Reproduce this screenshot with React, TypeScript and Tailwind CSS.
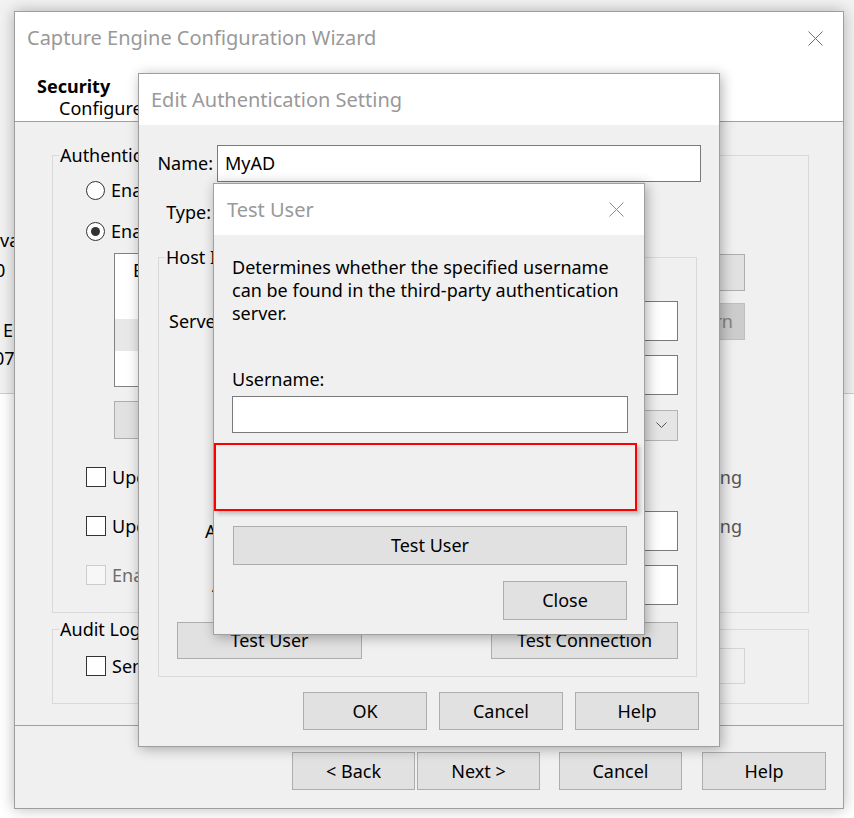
import React from "react";

function CloseX({ color = "#777" }: { color?: string }) {
  return (
    <svg width="15" height="15" viewBox="0 0 15 15">
      <path d="M0.5 0.5 L14.5 14.5 M14.5 0.5 L0.5 14.5" stroke={color} strokeWidth="1" fill="none" />
    </svg>
  );
}

function Btn({
  className = "",
  children,
  disabled = false,
}: {
  className?: string;
  children?: React.ReactNode;
  disabled?: boolean;
}) {
  return (
    <div
      className={
        (disabled
          ? "border-[#bfbfbf] bg-[#cccccc] text-[#838383] "
          : "border-[#adadad] bg-[#e1e1e1] text-black ") +
        "flex shrink-0 items-center justify-center border " +
        className
      }
    >
      {children}
    </div>
  );
}

function Radio({ checked = false }: { checked?: boolean }) {
  return (
    <span className="flex h-[19px] w-[19px] shrink-0 items-center justify-center rounded-full border border-[#333333] bg-white">
      {checked && <span className="h-[9px] w-[9px] rounded-full bg-[#333333]" />}
    </span>
  );
}

function Check({ disabled = false }: { disabled?: boolean }) {
  return (
    <span
      className={
        (disabled ? "border-[#cccccc] bg-[#f7f7f7] " : "border-[#333333] bg-white ") +
        "block h-[20px] w-[20px] shrink-0 border"
      }
    />
  );
}

function Input({ className = "", children }: { className?: string; children?: React.ReactNode }) {
  return (
    <div className={"flex shrink-0 items-center border border-[#7a7a7a] bg-white " + className}>{children}</div>
  );
}

export default function App() {
  return (
    <div className="relative h-[818px] w-[854px] overflow-hidden bg-white font-['Segoe_UI','Noto_Sans',sans-serif] text-[18px] text-black">
      {/* background application window */}
      <div className="absolute inset-0 flex flex-col">
        <div className="h-[394px] border-b border-[#cfcfcf] bg-[#f2f2f2] pt-[228px] leading-[24px]">
          <div className="-ml-[15px]">Java</div>
          <div className="-ml-[5px] mt-[6px]">0</div>
          <div className="ml-[3px] mt-[36px]">E</div>
          <div className="-ml-[6px] mt-[4px]">07</div>
        </div>
        <div className="flex-1 bg-white" />
      </div>

      {/* Wizard window */}
      <div className="absolute left-[14px] top-[11px] flex h-[798px] w-[830px] flex-col border border-[#9e9e9e] bg-[#f0f0f0] shadow-[0_0_14px_rgba(0,0,0,0.28)]">
        <div className="h-[110px] shrink-0 border-b border-[#a0a0a0] bg-white">
          <div className="flex h-[52px] items-center justify-between pl-[12px] pr-[20px]">
            <span className="text-[20px] text-[#999999]">Capture Engine Configuration Wizard</span>
            <CloseX color="#6f6f6f" />
          </div>
          <div className="mt-[11px] pl-[22px] font-bold leading-[22px]">Security</div>
          <div className="pl-[44px] leading-[22px]">Configure authentication settings for the capture engine.</div>
        </div>

        <div className="flex-1 pl-[37px] pt-[22px]">
          <fieldset className="h-[469px] w-[757px] min-w-0 border border-[#d9d9d9]">
            <legend className="ml-[6px] px-[1px] leading-[22px]">Authentication</legend>
            <div className="mt-[14px] flex h-[20px] items-center pl-[33px]">
              <Radio />
              <span className="ml-[6px]">Enable built-in authentication only</span>
            </div>
            <div className="mt-[21px] flex h-[20px] items-center pl-[33px]">
              <Radio checked />
              <span className="ml-[6px]">Enable third-party authentication</span>
            </div>
            <div className="mt-[12px] flex pl-[61px]">
              <div className="flex h-[134px] w-[490px] flex-col border border-[#828282] bg-white">
                <div className="flex h-[32px] items-center pl-[18px]">Enterprise Directory</div>
                <div className="h-[33px]" />
                <div className="h-[32px] bg-[#e8e8e8]" />
              </div>
              <div className="ml-auto mr-[63px] flex flex-col gap-[12px] pt-[1px]">
                <Btn className="h-[37px] w-[123px]">Add</Btn>
                <Btn disabled className="h-[37px] w-[123px] !justify-end pr-[11px]">Learn</Btn>
              </div>
            </div>
            <div className="mt-[14px] pl-[61px]">
              <Btn className="h-[38px] w-[150px]">Edit</Btn>
            </div>
            <div className="mt-[28px] flex h-[20px] items-center pl-[33px]">
              <Check />
              <span className="ml-[6px]">Update user settings</span>
              <span className="ml-auto mr-[66px] text-[#555555]">Logging</span>
            </div>
            <div className="mt-[29px] flex h-[20px] items-center pl-[33px]">
              <Check />
              <span className="ml-[6px]">Update group settings</span>
              <span className="ml-auto mr-[66px] text-[#555555]">Logging</span>
            </div>
            <div className="mt-[29px] flex h-[20px] items-center pl-[33px]">
              <Check disabled />
              <span className="ml-[6px] text-[#6d6d6d]">Enable single sign-on</span>
            </div>
          </fieldset>

          <fieldset className="mt-[5px] h-[86px] w-[757px] min-w-0 border border-[#d9d9d9]">
            <legend className="ml-[6px] px-[1px] leading-[22px]">Audit Log</legend>
            <div className="mt-[8px] flex items-center pl-[33px]">
              <Check />
              <span className="ml-[6px]">Send audit log</span>
              <div className="ml-auto mr-[63px] h-[36px] w-[123px] border border-[#d4d4d4] bg-[#f0f0f0]" />
            </div>
          </fieldset>
        </div>

        <div className="flex h-[83px] shrink-0 items-start justify-end border-t border-[#a0a0a0] pr-[17px] pt-[26px]">
          <Btn className="h-[38px] w-[123px]">&lt; Back</Btn>
          <Btn className="ml-[2px] h-[38px] w-[123px]">Next &gt;</Btn>
          <Btn className="ml-[19px] h-[38px] w-[123px]">Cancel</Btn>
          <Btn className="ml-[20px] h-[38px] w-[124px]">Help</Btn>
        </div>
      </div>

      {/* Edit Authentication Setting dialog */}
      <div className="absolute left-[138px] top-[73px] flex h-[674px] w-[582px] flex-col border border-[#9e9e9e] bg-[#f0f0f0] shadow-[2px_2px_12px_rgba(0,0,0,0.3)]">
        <div className="flex h-[51px] shrink-0 items-center bg-white pl-[12px] text-[20px] text-[#999999]">
          Edit Authentication Setting
        </div>
        <div className="flex flex-1 flex-col pt-[20px]">
          <div className="flex items-center">
            <span className="w-[74px] text-right">Name:</span>
            <Input className="ml-[4px] h-[37px] w-[484px] pl-[7px]">MyAD</Input>
          </div>
          <div className="mt-[12px] flex items-center">
            <span className="w-[72px] text-right">Type:</span>
            <Input className="ml-[6px] h-[37px] w-[400px] pl-[7px]">Active Directory</Input>
          </div>
          <fieldset className="ml-[19px] mt-[15px] h-[431px] w-[539px] min-w-0 border border-[#d9d9d9]">
            <legend className="ml-[6px] px-[1px] leading-[22px]">Host Information</legend>
            <div className="mt-[33px] flex h-[40px] items-center">
              <span className="ml-[10px] whitespace-nowrap">Server address:</span>
              <Input className="ml-auto mr-[18px] h-[40px] w-[340px]" />
            </div>
            <div className="mt-[14px] flex h-[40px] items-center">
              <span className="ml-[110px]">Port:</span>
              <Input className="ml-auto mr-[18px] h-[40px] w-[340px]" />
            </div>
            <div className="mt-[15px] flex h-[31px] items-center">
              <span className="ml-[90px]">Protocol:</span>
              <div className="ml-auto mr-[18px] flex h-[31px] w-[340px] items-center justify-end border border-[#b4b4b4] bg-[#e5e5e5] pr-[10px]">
                <svg width="11" height="7" viewBox="0 0 11 7">
                  <path d="M0.5 0.5 L5.5 5.5 L10.5 0.5" stroke="#555555" strokeWidth="1" fill="none" />
                </svg>
              </div>
            </div>
            <div className="mt-[70px] flex h-[40px] items-center">
              <span className="ml-[46px] whitespace-nowrap">Admin user:</span>
              <Input className="ml-auto mr-[18px] h-[40px] w-[340px]" />
            </div>
            <div className="mt-[14px] flex h-[40px] items-center">
              <span className="ml-[53px] whitespace-nowrap">Admin pwd:</span>
              <Input className="ml-auto mr-[18px] h-[40px] w-[340px]" />
            </div>
            <div className="mt-[17px] flex justify-between px-[18px]">
              <Btn className="h-[37px] w-[185px]">Test User</Btn>
              <Btn className="h-[37px] w-[187px]">Test Connection</Btn>
            </div>
          </fieldset>
          <div className="mt-[15px] flex justify-end gap-[12px] pr-[20px]">
            <Btn className="h-[38px] w-[124px]">OK</Btn>
            <Btn className="h-[38px] w-[124px]">Cancel</Btn>
            <Btn className="h-[38px] w-[124px]">Help</Btn>
          </div>
        </div>
      </div>

      {/* Test User dialog */}
      <div className="absolute left-[213px] top-[183px] flex h-[452px] w-[432px] flex-col border border-[#a0a0a0] bg-[#f0f0f0] shadow-[2px_2px_12px_rgba(0,0,0,0.32)]">
        <div className="flex h-[51px] shrink-0 items-center justify-between bg-white pl-[13px] pr-[20px]">
          <span className="text-[20px] text-[#999999]">Test User</span>
          <CloseX color="#8a8a8a" />
        </div>
        <div className="flex flex-1 flex-col pl-[18px] pr-[17px] pt-[21px]">
          <p className="whitespace-nowrap leading-[23px]">
            Determines whether the specified username
            <br />
            can be found in the third-party authentication
            <br />
            server.
          </p>
          <div className="mt-[43px] leading-[23px]">Username:</div>
          <Input className="mt-[5px] h-[37px] w-[396px]" />
          <div className="-ml-[18px] mt-[10px] h-[68px] w-[423px] shrink-0 border-2 border-[#ff0000] shadow-[3px_3px_4px_rgba(0,0,0,0.22)]" />
          <Btn className="ml-px mt-[15px] h-[39px] w-[394px]">Test User</Btn>
          <Btn className="mt-[16px] h-[39px] w-[124px] self-end">Close</Btn>
        </div>
      </div>
    </div>
  );
}
